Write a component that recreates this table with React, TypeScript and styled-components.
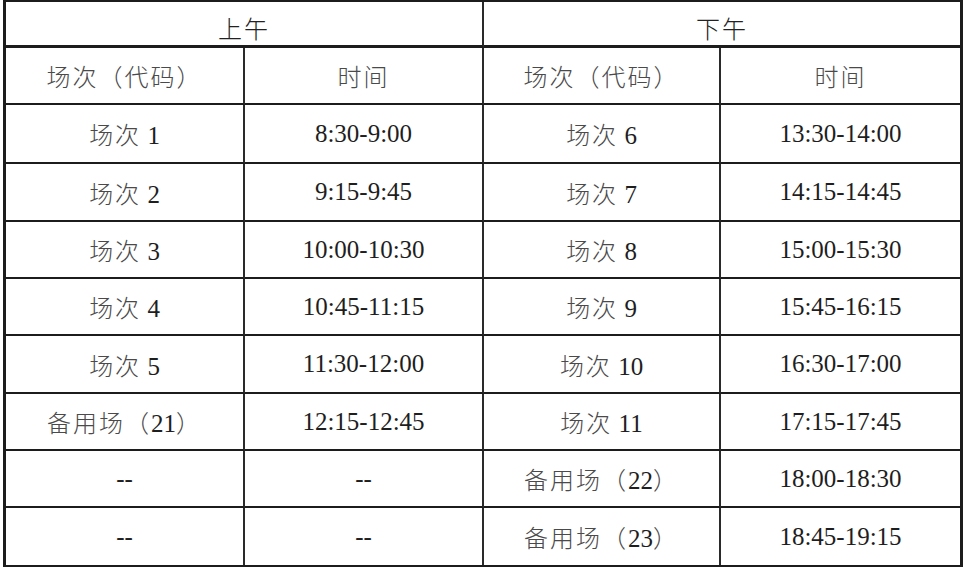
import styled, { createGlobalStyle } from "styled-components";

const GlobalStyle = createGlobalStyle`
  html, body {
    margin: 0;
    padding: 0;
    background: #ffffff;
  }
  body {
    font-family: "Liberation Serif", "Noto Sans CJK SC", serif;
  }
`;

const Page = styled.div`
  padding: 0 3px;
`;

const Table = styled.table`
  border-collapse: separate;
  border-spacing: 0;
  table-layout: fixed;
  width: 960px;
  border-top: 2px solid #1c1c1c;
  border-left: 3px solid #1c1c1c;
  border-right: 3px solid #1c1c1c;
  border-bottom: 3px solid #1c1c1c;
`;

const Cell = styled.td<{ $last?: boolean; $height: number; $bottom?: number }>`
  box-sizing: border-box;
  height: ${(p) => p.$height}px;
  padding: 0;
  text-align: center;
  vertical-align: middle;
  font-size: 25px;
  color: #1e1e1e;
  border-right: ${(p) => (p.$last ? "none" : "2px solid #2a2a2a")};
  border-bottom: ${(p) => (p.$bottom ? `${p.$bottom}px solid #1c1c1c` : "none")};
`;

const HeadCell = styled(Cell).attrs({ as: "th" })`
  font-weight: normal;
  padding-top: 8px;
`;

const Han = styled.span<{ $dark?: boolean }>`
  font-family: "Noto Sans CJK SC", sans-serif;
  font-size: 24px;
  font-weight: 300;
  letter-spacing: 2px;
  color: ${(p) => (p.$dark ? "#222" : "#4a4a4a")};
`;

type Row = [string, string, string, string];

const rows: Row[] = [
  ["场次 1", "8:30-9:00", "场次 6", "13:30-14:00"],
  ["场次 2", "9:15-9:45", "场次 7", "14:15-14:45"],
  ["场次 3", "10:00-10:30", "场次 8", "15:00-15:30"],
  ["场次 4", "10:45-11:15", "场次 9", "15:45-16:15"],
  ["场次 5", "11:30-12:00", "场次 10", "16:30-17:00"],
  ["备用场（21）", "12:15-12:45", "场次 11", "17:15-17:45"],
  ["--", "--", "备用场（22）", "18:00-18:30"],
  ["--", "--", "备用场（23）", "18:45-19:15"],
];

// wrap runs of CJK characters so they get the lighter CJK style
function Mixed({ text }: { text: string }) {
  const parts = text.split(/([\u3000-\u9fff\uff00-\uffef]+)/).filter(Boolean);
  return (
    <>
      {parts.map((part, i) =>
        /[\u3000-\u9fff\uff00-\uffef]/.test(part) ? (
          <Han key={i}>{part}</Han>
        ) : (
          <span key={i}>{part}</span>
        )
      )}
    </>
  );
}

const rowHeights = [59, 58, 57, 57, 58, 57, 57, 57];

export default function App() {
  return (
    <Page>
      <GlobalStyle />
      <Table>
        <colgroup>
          <col style={{ width: 239 }} />
          <col style={{ width: 239 }} />
          <col style={{ width: 237 }} />
          <col style={{ width: 239 }} />
        </colgroup>
        <thead>
          <tr>
            <HeadCell colSpan={2} $height={45} $bottom={3}>
              <Han $dark>上午</Han>
            </HeadCell>
            <HeadCell colSpan={2} $height={45} $bottom={3} $last>
              <Han $dark>下午</Han>
            </HeadCell>
          </tr>
          <tr>
            <Cell $height={57} $bottom={2}>
              <Han>场次（代码）</Han>
            </Cell>
            <Cell $height={57} $bottom={2}>
              <Han>时间</Han>
            </Cell>
            <Cell $height={57} $bottom={2}>
              <Han>场次（代码）</Han>
            </Cell>
            <Cell $height={57} $bottom={2} $last>
              <Han>时间</Han>
            </Cell>
          </tr>
        </thead>
        <tbody>
          {rows.map((row, r) => {
            const isLast = r === rows.length - 1;
            return (
              <tr key={r}>
                {row.map((text, c) => (
                  <Cell
                    key={c}
                    $height={rowHeights[r]}
                    $bottom={isLast ? 0 : 2}
                    $last={c === row.length - 1}
                  >
                    <Mixed text={text} />
                  </Cell>
                ))}
              </tr>
            );
          })}
        </tbody>
      </Table>
    </Page>
  );
}
